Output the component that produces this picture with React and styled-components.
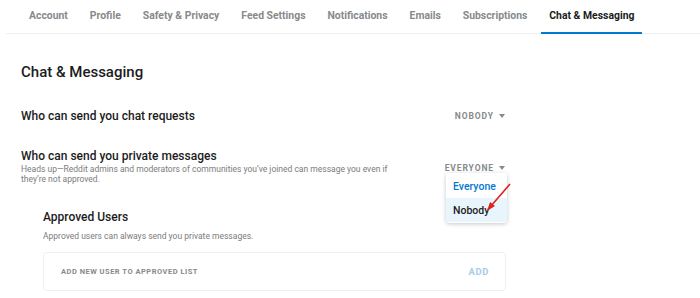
import React from "react";
import styled, { createGlobalStyle } from "styled-components";

const GlobalStyle = createGlobalStyle`
  body {
    margin: 0;
    background: #fff;
    font-family: Roboto, "Noto Sans", sans-serif;
  }
`;

const Page = styled.div`
  width: 700px;
  height: 298px;
  overflow: hidden;
  position: relative;
`;

const TabBar = styled.nav`
  display: flex;
  gap: 6px;
  margin-left: 6px;
  padding-left: 15px;
  border-bottom: 1px solid #edeff1;
  height: 33px;
`;

const Tab = styled.div`
  padding: 0 8px;
  display: flex;
  align-items: center;
  white-space: nowrap;
  flex-shrink: 0;
  font-size: 10.4px;
  font-weight: 700;
  color: ${(p) => (p.active ? "#1c1c1c" : "#878a8c")};
  border-bottom: 2px solid ${(p) => (p.active ? "#0079d3" : "transparent")};
  margin-bottom: -1px;
  padding-bottom: 1px;
`;

const Section = styled.section`
  width: 485px;
  margin-left: 21px;
`;

const Heading = styled.h2`
  margin: 0;
  padding-top: 28px;
  font-size: 15px;
  font-weight: 500;
  color: #1c1c1c;
  line-height: 20px;
`;

const Row = styled.div`
  display: flex;
  align-items: ${(p) => (p.top ? "flex-start" : "center")};
  justify-content: space-between;
  margin-top: ${(p) => p.mt}px;
`;

const Label = styled.div`
  display: flex;
  flex-direction: column;
`;

const Title = styled.div`
  font-size: 12px;
  font-weight: 500;
  color: #1c1c1c;
  line-height: 16px;
`;

const Help = styled.div`
  font-size: 8.5px;
  color: #7c7c7c;
  line-height: 10px;
  max-width: ${(p) => p.max || 400}px;
  margin-top: ${(p) => p.mt || 0}px;
`;

const DropWrap = styled.div`
  position: relative;
  margin-top: ${(p) => p.mt || 0}px;
`;

const DropButton = styled.div`
  display: flex;
  align-items: center;
  gap: 5px;
  font-size: 8.5px;
  font-weight: 700;
  letter-spacing: 0.9px;
  color: #878a8c;
  padding-right: 1px;
`;

const Caret = styled.span`
  width: 0;
  height: 0;
  border-left: 3.5px solid transparent;
  border-right: 3.5px solid transparent;
  border-top: 4px solid #878a8c;
`;

const Menu = styled.div`
  position: absolute;
  top: 10px;
  right: -1px;
  width: 61px;
  background: #fff;
  border-radius: 3px;
  box-shadow: 0 1px 4px rgba(0, 0, 0, 0.22);
  padding-top: 1px;
  padding-bottom: 1px;
`;

const MenuItem = styled.div`
  height: 24px;
  display: flex;
  align-items: center;
  padding-left: 7px;
  font-size: 10.5px;
  font-weight: 500;
  color: ${(p) => (p.selected ? "#0079d3" : "#1c1c1c")};
  background: ${(p) => (p.hover ? "#e9f5fd" : "#fff")};
`;

const Sub = styled.div`
  margin-left: 22px;
  margin-top: 25px;
`;

const AddBox = styled.div`
  margin-top: 11px;
  height: 37px;
  border: 1px solid #edeff1;
  border-radius: 4px;
  display: flex;
  align-items: center;
  justify-content: space-between;
  padding: 0 16px 0 17px;
`;

const AddLabel = styled.span`
  font-size: 7.5px;
  font-weight: 700;
  letter-spacing: 0.5px;
  color: #878a8c;
`;

const AddButton = styled.span`
  font-size: 9.5px;
  font-weight: 700;
  letter-spacing: 0.6px;
  color: #a8cce8;
`;

const Arrow = styled.svg`
  position: absolute;
  left: 480px;
  top: 178px;
  pointer-events: none;
`;

const tabs = [
  "Account",
  "Profile",
  "Safety & Privacy",
  "Feed Settings",
  "Notifications",
  "Emails",
  "Subscriptions",
  "Chat & Messaging",
];

export default function App() {
  return (
    <Page>
      <GlobalStyle />
      <TabBar>
        {tabs.map((t) => (
          <Tab key={t} active={t === "Chat & Messaging"}>
            {t}
          </Tab>
        ))}
      </TabBar>
      <Section>
        <Heading>Chat &amp; Messaging</Heading>
        <Row mt={26}>
          <Title>Who can send you chat requests</Title>
          <DropButton>
            NOBODY <Caret />
          </DropButton>
        </Row>
        <Row mt={24} top>
          <Label>
            <Title>Who can send you private messages</Title>
            <Help max={390}>
              Heads up—Reddit admins and moderators of communities you’ve joined
              can message you even if
              <br />
              they’re not approved.
            </Help>
          </Label>
          <DropWrap mt={15}>
            <DropButton>
              EVERYONE <Caret />
            </DropButton>
            <Menu>
              <MenuItem selected>Everyone</MenuItem>
              <MenuItem hover>Nobody</MenuItem>
            </Menu>
          </DropWrap>
        </Row>
        <Sub>
          <Title>Approved Users</Title>
          <Help mt={6}>Approved users can always send you private messages.</Help>
          <AddBox>
            <AddLabel>ADD NEW USER TO APPROVED LIST</AddLabel>
            <AddButton>ADD</AddButton>
          </AddBox>
        </Sub>
      </Section>
      <Arrow width="40" height="40" viewBox="0 0 40 40">
        <line x1="30" y1="6" x2="11" y2="28" stroke="#e0201c" strokeWidth="1.6" />
        <polygon points="7,33 10,24 15,28" fill="#e0201c" />
      </Arrow>
    </Page>
  );
}
